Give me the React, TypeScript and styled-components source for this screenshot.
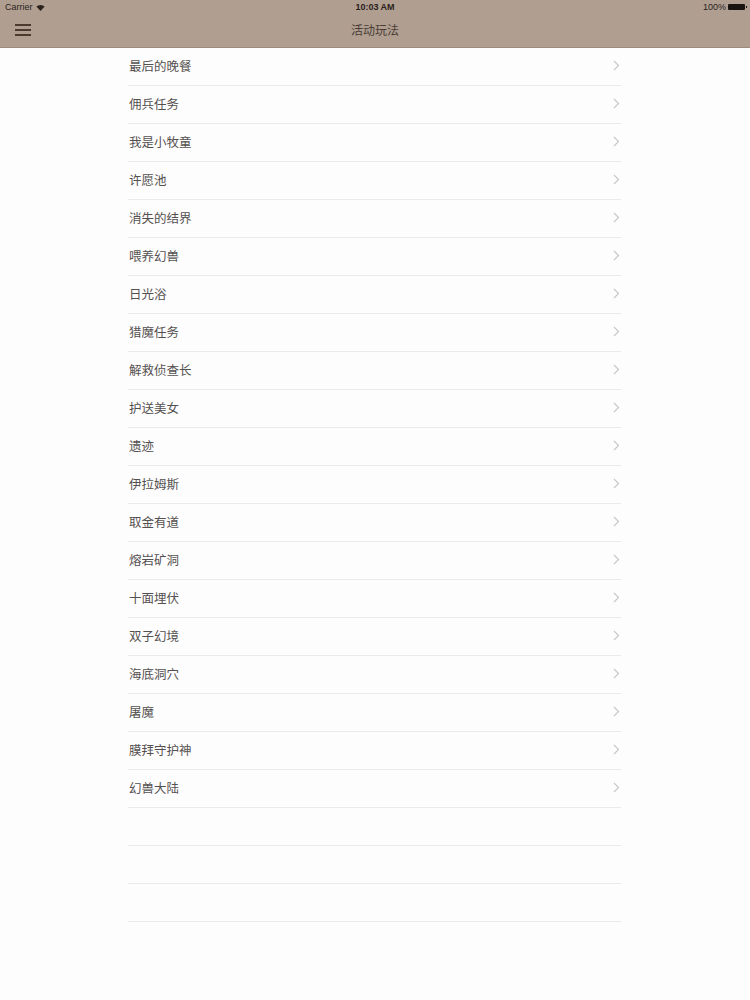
import React from "react";
import styled, { createGlobalStyle } from "styled-components";

const GlobalStyle = createGlobalStyle`
  html, body {
    margin: 0;
    padding: 0;
    background: #fefdfd;
    font-family: "Noto Sans CJK SC", "Liberation Sans", sans-serif;
  }
`;

const Header = styled.header`
  background: #b09f91;
  border-bottom: 1px solid #9c8c80;
  height: 47px;
  display: flex;
  flex-direction: column;
`;

const StatusBar = styled.div`
  height: 14px;
  display: grid;
  grid-template-columns: 1fr auto 1fr;
  align-items: center;
  padding: 0 5px;
  font-family: "Liberation Sans", sans-serif;
  font-size: 9px;
  color: #2a211c;
`;

const StatusLeft = styled.div`
  display: flex;
  align-items: center;
  gap: 3px;
`;

const StatusTime = styled.div`
  font-weight: bold;
`;

const StatusRight = styled.div`
  display: flex;
  justify-content: flex-end;
  align-items: center;
  gap: 2px;
`;

const Battery = styled.span`
  display: inline-block;
  width: 17px;
  height: 6px;
  background: #1a1410;
  border-radius: 1px;
  position: relative;
  &::after {
    content: "";
    position: absolute;
    right: -2px;
    top: 2px;
    width: 1px;
    height: 2px;
    background: #1a1410;
  }
`;

const NavBar = styled.div`
  flex: 1;
  display: grid;
  grid-template-columns: 60px 1fr 60px;
  align-items: center;
  padding-bottom: 2px;
`;

const MenuButton = styled.div`
  display: flex;
  flex-direction: column;
  gap: 3px;
  padding-left: 15px;
  & > span {
    display: block;
    width: 16px;
    height: 2px;
    background: #4a3a30;
  }
`;

const Title = styled.div`
  text-align: center;
  font-size: 12px;
  color: #4a3d35;
`;

const Wrap = styled.main`
  padding-left: 128px;
`;

const List = styled.ul`
  list-style: none;
  margin: 0;
  padding: 0;
  width: 493px;
`;

const Row = styled.li`
  height: 37px;
  border-bottom: 1px solid #ebe9e9;
  display: flex;
  align-items: center;
  justify-content: space-between;
  padding: 0 1px 3px 1px;
  box-sizing: border-box;
  height: 38px;
  font-size: 12.5px;
  color: #545050;
`;

const Chevron = () => (
  <svg width="7" height="11" viewBox="0 0 7 11">
    <path d="M1 1l4.5 4.5L1 10" fill="none" stroke="#c9c7c7" strokeWidth="1.2" />
  </svg>
);

const items = [
  "最后的晚餐",
  "佣兵任务",
  "我是小牧童",
  "许愿池",
  "消失的结界",
  "喂养幻兽",
  "日光浴",
  "猎魔任务",
  "解救侦查长",
  "护送美女",
  "遗迹",
  "伊拉姆斯",
  "取金有道",
  "熔岩矿洞",
  "十面埋伏",
  "双子幻境",
  "海底洞穴",
  "屠魔",
  "膜拜守护神",
  "幻兽大陆",
];

export default function App() {
  return (
    <>
      <GlobalStyle />
      <Header>
        <StatusBar>
          <StatusLeft>
            Carrier
            <svg width="9" height="7" viewBox="0 0 12 9">
              <path d="M6 9L0.5 3.2A8 8 0 0 1 11.5 3.2Z" fill="#2a211c" />
            </svg>
          </StatusLeft>
          <StatusTime>10:03 AM</StatusTime>
          <StatusRight>
            100%
            <Battery />
          </StatusRight>
        </StatusBar>
        <NavBar>
          <MenuButton>
            <span />
            <span />
            <span />
          </MenuButton>
          <Title>活动玩法</Title>
          <div />
        </NavBar>
      </Header>
      <Wrap>
        <List>
          {items.map((t) => (
            <Row key={t}>
              <span>{t}</span>
              <Chevron />
            </Row>
          ))}
          <Row />
          <Row />
          <Row />
        </List>
      </Wrap>
    </>
  );
}
